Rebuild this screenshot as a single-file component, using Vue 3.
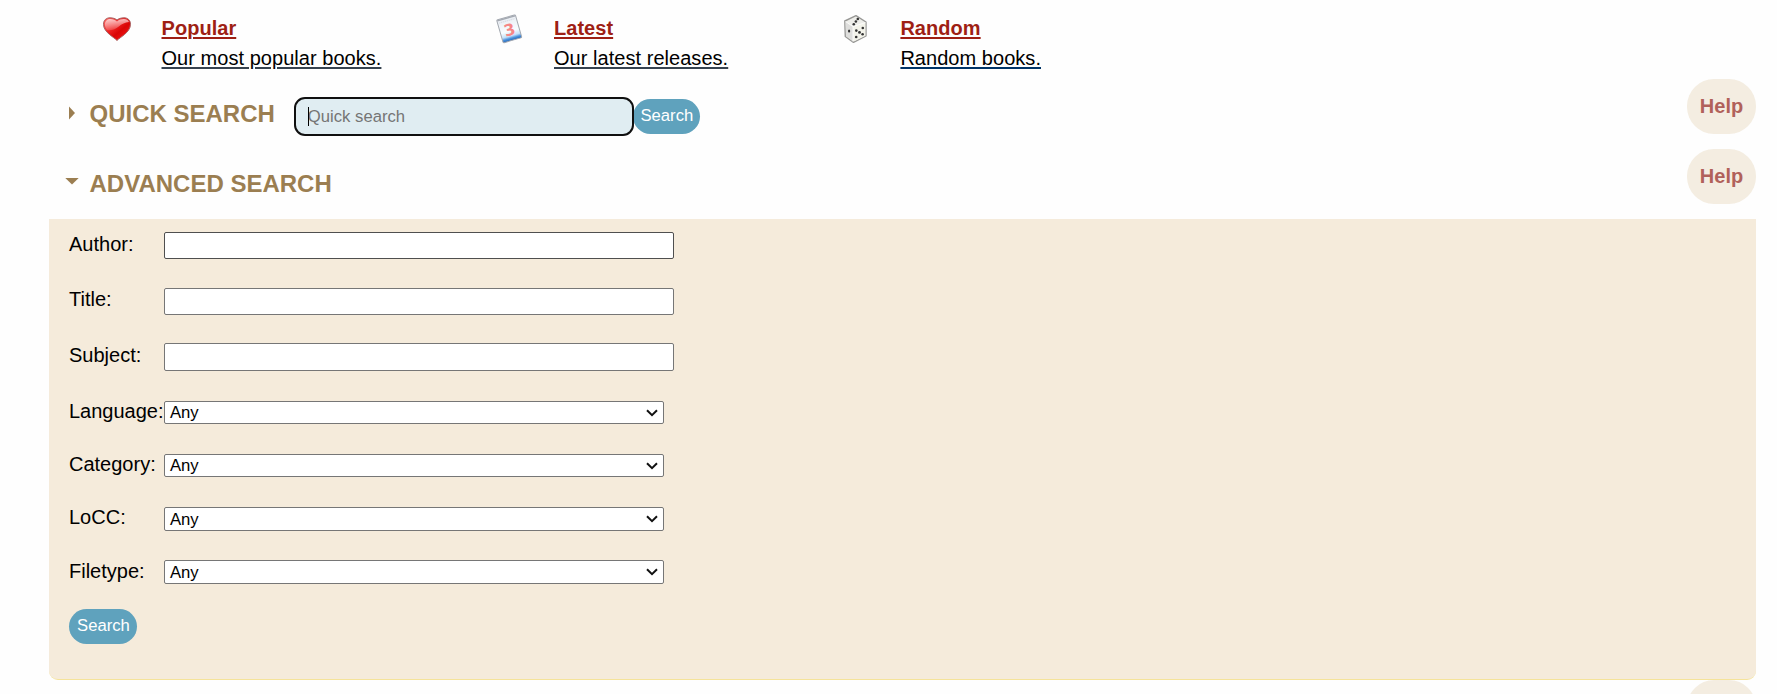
<script setup>
const fields = [
  { id: 'author', label: 'Author:' },
  { id: 'title', label: 'Title:' },
  { id: 'subject', label: 'Subject:' },
]
const menus = [
  { id: 'language', label: 'Language:' },
  { id: 'category', label: 'Category:' },
  { id: 'locc', label: 'LoCC:' },
  { id: 'filetype', label: 'Filetype:' },
]
</script>

<template>
  <main class="page">
    <nav class="links">
      <div class="link popular">
        <svg class="icon" width="32" height="32" viewBox="0 0 32 32">
          <defs>
            <linearGradient id="heart" x1="0" y1="0" x2="1" y2="1">
              <stop offset="0" stop-color="#ff6964" />
              <stop offset=".4" stop-color="#ee2020" />
              <stop offset=".6" stop-color="#d90505" />
              <stop offset="1" stop-color="#ff1b1b" />
            </linearGradient>
            <linearGradient id="shine" x1="0" y1="0" x2="0" y2="1">
              <stop offset="0" stop-color="#fff" stop-opacity=".7" />
              <stop offset="1" stop-color="#fff" stop-opacity=".15" />
            </linearGradient>
          </defs>
          <path d="M17 28.5C14.5 25.5 3.5 20.5 3.5 12.3C3.5 8 6.3 5.8 10 5.8C13 5.8 15.3 6.6 17 8C18.7 6.6 21 5.8 24 5.8C27.7 5.8 30.5 8 30.5 12.3C30.5 20.5 19.5 25.5 17 28.5Z" fill="url(#heart)" stroke="#a86464" stroke-width="1" />
          <path d="M4.9 12.5C4.9 8.8 7.3 6.9 10.3 6.9C13.3 6.9 15.5 7.8 17 9.4C19 7.6 21 6.9 23.8 6.9C26.5 6.9 28.5 8 29 10C25 10.5 22 11.8 18.5 14.8C14.5 18.2 10 18.8 7 18C5.7 16.5 4.9 14.3 4.9 12.5Z" fill="url(#shine)" />
        </svg>
        <a class="text"><b>Popular</b><span>Our most popular books.</span></a>
      </div>
      <div class="link latest">
        <svg class="icon" width="32" height="32" viewBox="0 0 32 32">
          <defs>
            <linearGradient id="sheet" x1="0" y1="0" x2="0" y2="1">
              <stop offset="0" stop-color="#e9edf3" />
              <stop offset=".6" stop-color="#f7fcff" />
              <stop offset=".8" stop-color="#c4e1fa" />
              <stop offset=".9" stop-color="#4c94de" />
              <stop offset="1" stop-color="#2467b8" />
            </linearGradient>
          </defs>
          <g transform="rotate(-16 16 17)">
            <rect x="6.6" y="5" width="19.4" height="23.8" rx="1" fill="url(#sheet)" stroke="#a3a8b0" stroke-width="1" />
            <path d="M7 6H25.5" stroke="#a4a9b1" stroke-width="1.4" />
            <path d="M8 8.6H24.5" stroke="#d9dde4" stroke-width="1.2" stroke-dasharray="1.4 .6" />
            <text x="16.4" y="23.6" class="day">3</text>
          </g>
        </svg>
        <a class="text"><b>Latest</b><span>Our latest releases.</span></a>
      </div>
      <div class="link random">
        <svg class="icon" width="32" height="32" viewBox="0 0 32 32">
          <path d="M4.8 9L16 3.6L26 10V24L13.5 30.4L5.3 24.5Z" fill="#eeeeea" stroke="#989896" stroke-width="1.4" stroke-linejoin="round" />
          <path d="M5.5 9.6L13 14.6V29.4L6 24.2Z" fill="#dededc" />
          <path d="M13 14.6L25.4 10.6V23.7L13.6 29.6Z" fill="#f3f3ea" />
          <path d="M5.6 9.6L13 14.6L25.4 10.6M13 14.6V29.4" fill="none" stroke="#fff" stroke-width=".8" />
          <g fill="#333">
            <circle cx="17.8" cy="7" r="1.3" /><circle cx="15.9" cy="9.5" r="1.3" /><circle cx="13.8" cy="12.2" r="1.3" />
            <ellipse cx="9.1" cy="19" rx="1.1" ry="1.5" />
            <circle cx="16.3" cy="18.6" r="1.3" /><circle cx="22.8" cy="16" r="1.3" /><circle cx="19.5" cy="20.4" r="1.4" /><circle cx="16.2" cy="25" r="1.3" /><circle cx="22.6" cy="22.2" r="1.3" />
          </g>
        </svg>
        <a class="text"><b>Random</b><span class="navy">Random books.</span></a>
      </div>
    </nav>

    <section class="bar quick">
      <svg class="marker" width="14" height="14" viewBox="0 0 14 14"><path d="M4 0.5L10 7L4 13.5Z" fill="#9b7e51" /></svg>
      <h2>QUICK SEARCH</h2>
      <form class="quick-form" @submit.prevent>
        <span class="quick-box"><input type="text" placeholder="Quick search"><i class="caret"></i></span>
        <button type="button" class="search">Search</button>
      </form>
      <button type="button" class="help">Help</button>
    </section>

    <section class="bar advanced">
      <svg class="marker" width="14" height="14" viewBox="0 0 14 14"><path d="M0.3 2H13.7L7 8.6Z" fill="#9b7e51" /></svg>
      <h2>ADVANCED SEARCH</h2>
      <button type="button" class="help">Help</button>
    </section>

    <form class="panel" @submit.prevent>
      <div v-for="f in fields" :key="f.id" class="row" :class="f.id">
        <label :for="f.id">{{ f.label }}</label>
        <input :id="f.id" type="text" class="field">
      </div>
      <div v-for="m in menus" :key="m.id" class="row" :class="m.id">
        <label :for="m.id">{{ m.label }}</label>
        <div :id="m.id" class="menu" role="combobox">
          <span>Any</span>
          <svg width="12" height="8" viewBox="0 0 12 8"><path d="M1 1.2L6 6.1L11 1.2" fill="none" stroke="#111" stroke-width="2" /></svg>
        </div>
      </div>
      <button type="button" class="search submit">Search</button>
    </form>
    <button type="button" class="help next"></button>
  </main>
</template>

<style>
body { background: #fff; overflow: hidden; }
</style>

<style scoped>
* { box-sizing: border-box; }
.page {
  width: 1777px;
  height: 694px;
  overflow: hidden;
  display: flex;
  flex-direction: column;
  background: #fefefe;
  color: #000;
  font: 20px/24px "Liberation Sans", Arial, sans-serif;
}
.links { display: flex; height: 72px; flex: none; padding: 12px 0 0 100px; }
.link { display: flex; align-items: flex-start; }
.icon { flex: none; }
.popular { width: 393px; }
.latest { width: 347px; }
.popular .icon { margin-right: 29.5px; }
.latest .icon { margin-right: 29px; }
.random .icon { margin-right: 28.4px; }
.text { display: flex; flex-direction: column; align-items: flex-start; padding-top: 4px; letter-spacing: .04px; }
.text b, .text span { height: 30px; text-decoration: underline; text-decoration-thickness: 2px; text-underline-offset: 2px; }
.text b { color: #9e1f14; }
.text span { text-decoration-color: #36424f; }
.text .navy { text-decoration-color: #003366; }
.day { font: bold 16px "DejaVu Sans", sans-serif; fill: #f58787; text-anchor: middle; }

.bar { display: flex; align-items: flex-start; flex: none; height: 70px; padding: 7px 21px 0 65px; }
.marker { flex: none; margin-top: 27px; }
h2 { margin: 21px 0 0 10.5px; font-size: 24px; line-height: 28px; color: #9b7e51; white-space: nowrap; }
.quick-form { display: flex; align-items: flex-start; margin: 18px 0 0 19px; }
.quick-box { position: relative; display: block; }
.quick-box input {
  display: block;
  width: 340px;
  height: 39px;
  margin: 0;
  padding: 0 12px;
  border: 2px solid #101010;
  border-radius: 11px;
  background: #e0edf2;
  font: 16.667px "Liberation Sans", Arial, sans-serif;
  outline: none;
}
.quick-box input::placeholder { color: #757575; opacity: 1; }
.caret { position: absolute; left: 14px; top: 10px; width: 1px; height: 19px; background: #000; }
.search {
  width: 67px;
  height: 35px;
  margin: 2px 0 0 -1px;
  padding: 0 0 1px 1px;
  border: 0;
  border-radius: 17.5px;
  background: #5fa2bd;
  color: #fff;
  font: 16.667px "Liberation Sans", Arial, sans-serif;
}
.help {
  flex: none;
  width: 69px;
  height: 55px;
  margin: 0 0 0 auto;
  padding: 0;
  border: 0;
  border-radius: 27px;
  background: #f4ede1;
  color: #b1615a;
  font: bold 20px "Liberation Sans", Arial, sans-serif;
}
.panel {
  flex: none;
  width: 1707px;
  height: 461px;
  margin: 7px 0 0 49px;
  padding: 13px 0 0 20px;
  background: #f5ebdb;
  border-bottom: 1px solid #f5e39a;
  border-radius: 0 0 9px 9px;
}
.row { display: flex; align-items: flex-start; }
.row label { width: 95px; flex: none; white-space: nowrap; }
.author { height: 56px; }
.title { height: 55px; }
.subject { height: 58px; }
.language, .category, .locc { height: 53px; }
.filetype { height: 49px; }
.title label, .filetype label { margin-top: -1px; }
.language label, .category label, .locc label { margin-top: -2px; }
.field { width: 510px; height: 27px; margin: 0; padding: 0 3px; border: 1px solid #767676; border-radius: 2px; background: #fff; }
.author .field { border-color: #4f4f4f; }
.subject .field { height: 28px; }
.menu {
  display: flex;
  align-items: center;
  justify-content: space-between;
  width: 500px;
  height: 23px;
  padding: 0 5px;
  border: 1px solid #767676;
  border-radius: 2px;
  background: #fff;
  font-size: 16.667px;
  line-height: 21px;
}
.locc .menu, .filetype .menu { height: 24px; }
.submit { display: block; width: 68px; margin: 0; padding-bottom: 2px; }
.next { margin: 0 0 0 1687px; }
</style>
